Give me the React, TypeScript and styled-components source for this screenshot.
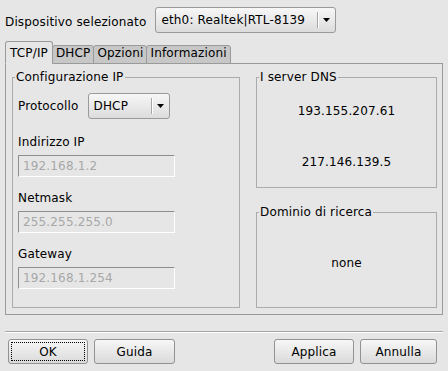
import React from 'react'
import styled, { createGlobalStyle } from 'styled-components'

const GlobalStyle = createGlobalStyle`
  html, body {
    margin: 0;
    padding: 0;
    background: #e6e6e6;
  }
  body {
    font-family: "DejaVu Sans", "Noto Sans", sans-serif;
    font-size: 12px;
    letter-spacing: 0.15px;
    color: #000;
  }
`

const Window = styled.div`
  width: 448px;
  height: 371px;
  box-sizing: border-box;
  padding-top: 7px;
  background: #e6e6e6;
`

const TopRow = styled.div`
  display: flex;
  align-items: center;
  gap: 9px;
  padding-left: 5px;
`

const Label = styled.span`
  line-height: 14px;
  white-space: nowrap;
`

const TopLabel = styled(Label)`
  margin-top: 3px;
`

const Combo = styled.div<{ $width: number }>`
  display: flex;
  align-items: stretch;
  width: ${p => p.$width}px;
  height: 26px;
  box-sizing: border-box;
  border: 1px solid #9a9a9a;
  border-radius: 3px;
  background: linear-gradient(#f7f7f7, #dcdcdc);
`

const ComboText = styled.div`
  flex: 1;
  display: flex;
  align-items: center;
  padding-left: 5px;
  white-space: nowrap;
  overflow: hidden;
`

const ComboSep = styled.div`
  width: 1px;
  margin: 4px 0;
  background: #a6a6a6;
  box-shadow: 1px 0 0 #fff;
`

const ComboArrow = styled.div`
  width: 17px;
  display: flex;
  align-items: center;
  justify-content: center;
`

const TabBar = styled.div`
  display: flex;
  align-items: flex-end;
  margin-top: 8px;
  margin-bottom: -1px;
  padding-left: 5px;
  position: relative;
  z-index: 1;
`

const Tab = styled.div<{ $active?: boolean }>`
  padding: ${p => (p.$active ? '4px 4px 3px' : '0 3px 3px')};
  line-height: 14px;
  border: 1px solid #9a9a9a;
  border-bottom-color: ${p => (p.$active ? '#e6e6e6' : '#9a9a9a')};
  border-radius: 3px 3px 0 0;
  background: ${p => (p.$active ? '#e6e6e6' : '#c7c7c7')};
  & + & {
    margin-left: -1px;
  }
`

const Panel = styled.div`
  display: grid;
  grid-template-columns: 228px 181px;
  column-gap: 16px;
  margin: 0 5px;
  padding: 6px 5px 6px 6px;
  border: 1px solid #9a9a9a;
`

const Group = styled.fieldset`
  margin: 0;
  min-width: 0;
  border: 1px solid #ababab;
`

const Legend = styled.legend`
  padding: 0 1px;
  margin-left: -3px;
  line-height: 14px;
`

const IpGroup = styled(Group)`
  padding: 9px 5px 18px;
`

const FormColumn = styled.div`
  display: flex;
  flex-direction: column;
  gap: 14px;
`

const ProtoRow = styled.div`
  display: flex;
  align-items: center;
  gap: 9px;
  margin-bottom: 2px;
`

const Field = styled.div`
  display: flex;
  flex-direction: column;
  gap: 6px;
`

const Input = styled.div`
  width: 157px;
  height: 22px;
  box-sizing: border-box;
  display: flex;
  align-items: center;
  padding-left: 4px;
  border-top: 1px solid #8e8e8e;
  border-left: 1px solid #8e8e8e;
  border-bottom: 1px solid #fff;
  border-right: 1px solid #fff;
  color: #a8a8a8;
  background: #e6e6e6;
`

const RightColumn = styled.div`
  display: flex;
  flex-direction: column;
  gap: 17px;
`

const CenterGroup = styled(Group)<{ $pad: string }>`
  padding: ${p => p.$pad};
`

const CenterList = styled.div`
  display: flex;
  flex-direction: column;
  align-items: center;
  gap: 37px;
  line-height: 14px;
`

const Separator = styled.div`
  margin: 16px 5px 0;
  border-top: 1px solid #a4a4a4;
  border-bottom: 1px solid #fff;
`

const ButtonRow = styled.div`
  display: flex;
  justify-content: space-between;
  padding: 6px 11px 0 8px;
`

const ButtonGroup = styled.div`
  display: flex;
  gap: 6px;
`

const Button = styled.div<{ $width: number; $focus?: boolean }>`
  width: ${p => p.$width}px;
  height: 25px;
  box-sizing: border-box;
  display: flex;
  align-items: center;
  justify-content: center;
  border: 1px solid #929292;
  border-radius: 3px;
  background: linear-gradient(#f7f7f7, #dadada);
  outline: ${p => (p.$focus ? '1px dotted #000' : 'none')};
  outline-offset: -4px;
`

const Arrow = () => (
  <svg width="7" height="4" viewBox="0 0 7 4">
    <polygon points="0,0 7,0 3.5,4" fill="#000" />
  </svg>
)

const ComboBox = ({ width, value }: { width: number; value: string }) => (
  <Combo $width={width}>
    <ComboText>{value}</ComboText>
    <ComboSep />
    <ComboArrow>
      <Arrow />
    </ComboArrow>
  </Combo>
)

const fields = [
  { label: 'Indirizzo IP', value: '192.168.1.2' },
  { label: 'Netmask', value: '255.255.255.0' },
  { label: 'Gateway', value: '192.168.1.254' },
]

export default function App() {
  return (
    <Window>
      <GlobalStyle />
      <TopRow>
        <TopLabel>Dispositivo selezionato</TopLabel>
        <ComboBox width={181} value="eth0: Realtek|RTL-8139" />
      </TopRow>

      <TabBar>
        <Tab $active>TCP/IP</Tab>
        <Tab>DHCP</Tab>
        <Tab>Opzioni</Tab>
        <Tab>Informazioni</Tab>
      </TabBar>

      <Panel>
        <IpGroup>
          <Legend>Configurazione IP</Legend>
          <FormColumn>
            <ProtoRow>
              <Label>Protocollo</Label>
              <ComboBox width={82} value="DHCP" />
            </ProtoRow>
            {fields.map(f => (
              <Field key={f.label}>
                <Label>{f.label}</Label>
                <Input>{f.value}</Input>
              </Field>
            ))}
          </FormColumn>
        </IpGroup>

        <RightColumn>
          <CenterGroup $pad="20px 5px 18px">
            <Legend>I server DNS</Legend>
            <CenterList>
              <span>193.155.207.61</span>
              <span>217.146.139.5</span>
            </CenterList>
          </CenterGroup>
          <CenterGroup $pad="37px 5px 37px">
            <Legend>Dominio di ricerca</Legend>
            <CenterList>
              <span>none</span>
            </CenterList>
          </CenterGroup>
        </RightColumn>
      </Panel>

      <Separator />

      <ButtonRow>
        <ButtonGroup>
          <Button $width={80} $focus>OK</Button>
          <Button $width={81}>Guida</Button>
        </ButtonGroup>
        <ButtonGroup>
          <Button $width={80}>Applica</Button>
          <Button $width={77}>Annulla</Button>
        </ButtonGroup>
      </ButtonRow>
    </Window>
  )
}
